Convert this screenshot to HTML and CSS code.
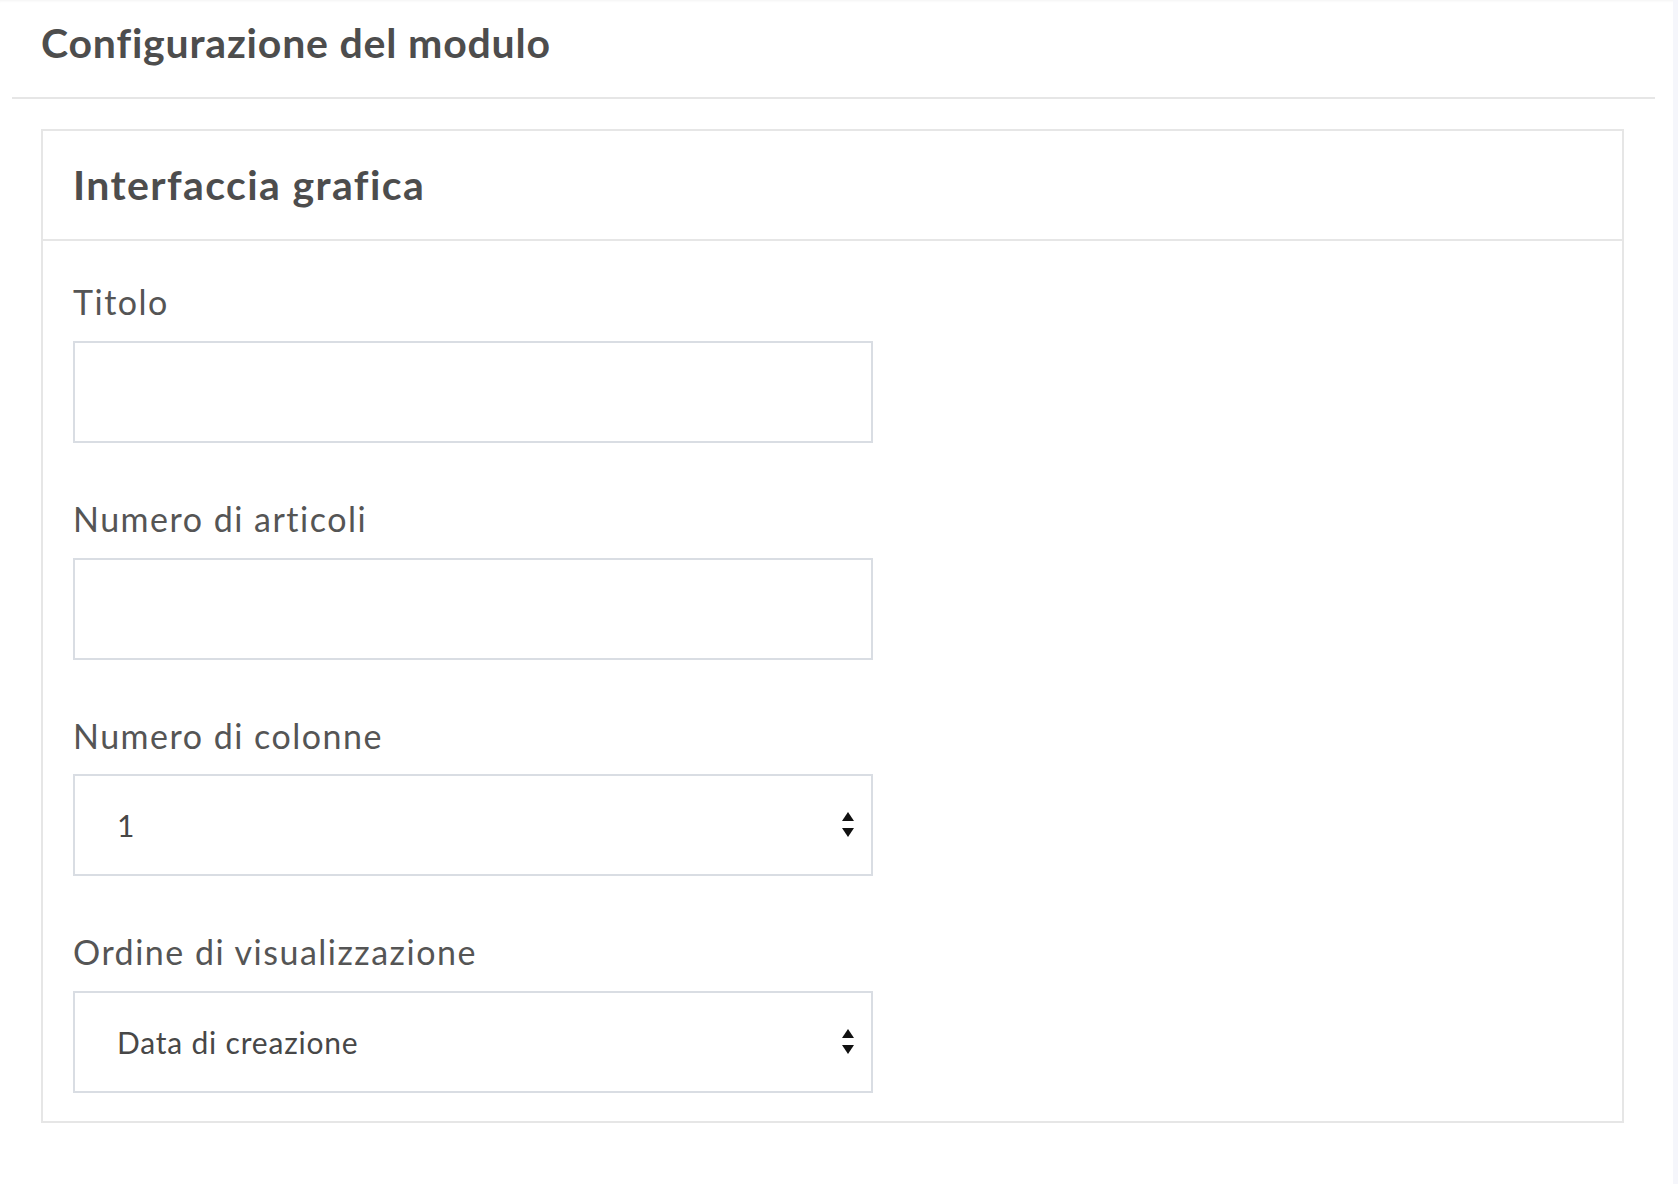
FILE: index.html
```html
<!DOCTYPE html>
<html lang="it">
<head>
    <meta charset="UTF-8">
    <meta name="viewport" content="width=device-width, initial-scale=1.0">
    <title>Configurazione del modulo</title>
    <link rel="stylesheet" href="styles.css">
</head>
<body>
    <div class="app">
        <div class="panel">
            <div class="panel-head">
                <h1>Configurazione del modulo</h1>
            </div>
            <div class="card">
                <div class="card-head">
                    <h2>Interfaccia grafica</h2>
                </div>
                <div class="card-body">
                    <div class="field">
                        <label for="titolo">Titolo</label>
                        <input type="text" id="titolo" class="control">
                    </div>
                    <div class="field">
                        <label for="articoli">Numero di articoli</label>
                        <input type="text" id="articoli" class="control">
                    </div>
                    <div class="field">
                        <label for="colonne">Numero di colonne</label>
                        <div class="select-wrap">
                            <select id="colonne" class="control select">
                                <option>1</option>
                                <option>2</option>
                                <option>3</option>
                                <option>4</option>
                            </select>
                            <svg class="arrows" width="12" height="26" viewBox="0 0 12 26">
                                <polygon points="6,0 12,9 0,9" />
                                <polygon points="0,16 12,16 6,25" />
                            </svg>
                        </div>
                    </div>
                    <div class="field">
                        <label for="ordine">Ordine di visualizzazione</label>
                        <div class="select-wrap">
                            <select id="ordine" class="control select">
                                <option>Data di creazione</option>
                                <option>Titolo</option>
                                <option>Casuale</option>
                            </select>
                            <svg class="arrows" width="12" height="26" viewBox="0 0 12 26">
                                <polygon points="6,0 12,9 0,9" />
                                <polygon points="0,16 12,16 6,25" />
                            </svg>
                        </div>
                    </div>
                </div>
            </div>
        </div>
        <div class="rail"></div>
    </div>
</body>
</html>
```

FILE: styles.css
```css
body {
    margin: 0;
    background-color: #ffffff;
    font-family: Lato, "Open Sans", sans-serif;
    color: #4f4f4f;
}
.app {
    display: flex;
    min-height: 1184px;
    box-shadow: inset 0 3px 3px -2px rgba(0, 0, 0, 0.05);
}
.panel {
    flex: 1;
    margin-left: 12px;
    margin-right: 18px;
}
.rail {
    width: 5px;
    background-color: #f5f6fb;
}
.panel-head {
    height: 99px;
    box-sizing: border-box;
    padding: 18px 29px 0;
    border-bottom: 2px solid #e6e6e6;
}
h1,
h2 {
    margin: 0;
    font-size: 41px;
    line-height: 1.2;
    font-weight: 700;
    color: #4d4d4d;
}
h1 {
    letter-spacing: 0.8px;
}
h2 {
    letter-spacing: 1.4px;
}
.card {
    margin: 30px 31px 0 29px;
    border: 2px solid #e6e6e6;
}
.card-head {
    height: 110px;
    box-sizing: border-box;
    padding: 29px 30px 0;
    border-bottom: 2px solid #e6e6e6;
}
.card-body {
    padding: 41px 30px 28px;
}
.field {
    margin-bottom: 56px;
}
.field:last-child {
    margin-bottom: 0;
}
label {
    display: block;
    font-size: 34px;
    line-height: 1.2;
    letter-spacing: 1.5px;
    margin-bottom: 18px;
    color: #555555;
}
.control {
    display: block;
    width: 800px;
    height: 102px;
    box-sizing: border-box;
    border: 2px solid #d9dde3;
    border-radius: 0;
    background-color: #ffffff;
    font-family: Lato, "Open Sans", sans-serif;
    font-size: 30px;
    letter-spacing: 0.8px;
    color: #474747;
    padding: 0 42px;
    outline: none;
}
.select {
    appearance: none;
    -webkit-appearance: none;
}
.select-wrap {
    position: relative;
    width: 800px;
}
.arrows {
    position: absolute;
    right: 19px;
    top: 38px;
    fill: #111111;
    pointer-events: none;
}
```
